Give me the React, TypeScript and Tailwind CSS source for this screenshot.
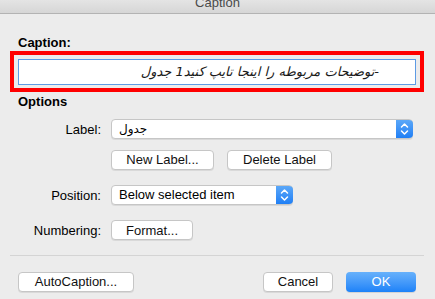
import React from "react";

function Stepper({ className = "" }: { className?: string }) {
  return (
    <div
      className={
        "flex h-full w-[17px] items-center justify-center rounded-r-[4px] bg-gradient-to-b from-[#5aa7f8] to-[#1e7ff5] " +
        className
      }
    >
      <svg width="9" height="14" viewBox="0 0 9 14" fill="none">
        <path d="M1.5 5 L4.5 2 L7.5 5" stroke="white" strokeWidth="1.5" strokeLinecap="round" strokeLinejoin="round" />
        <path d="M1.5 9 L4.5 12 L7.5 9" stroke="white" strokeWidth="1.5" strokeLinecap="round" strokeLinejoin="round" />
      </svg>
    </div>
  );
}

function Btn({ children, w }: { children: React.ReactNode; w: string }) {
  return (
    <div
      className={
        "flex h-[20px] items-center justify-center rounded-[4px] border border-[#c6c6c6] bg-white text-[13px] leading-none text-[#111] shadow-[0_1px_0_rgba(0,0,0,0.08)] " +
        w
      }
    >
      {children}
    </div>
  );
}

export default function App() {
  return (
    <div className="h-[299px] w-[435px] overflow-hidden bg-[#ececec] font-['Liberation_Sans',Arial,sans-serif] text-[13px] text-black">
      {/* title bar */}
      <div className="h-[14px] overflow-hidden border-b border-[#b3b3b3] bg-gradient-to-b from-[#e4e4e4] to-[#d6d6d6]">
        <div className="mt-[-5px] text-center text-[13px] leading-[16px] text-[#4a4a4a]">Caption</div>
      </div>

      <div className="mt-[21px] pl-[18px] font-bold leading-[16px]">Caption:</div>

      {/* red highlight box */}
      <div className="ml-[10px] h-[41px] w-[414px] border-[4px] border-[#ff0000] px-[4px] pb-[3px] pt-[4px]">
        <div
          dir="rtl"
          className="flex h-[26px] items-center border border-[#5d9be4] bg-white pr-[36px] font-['DejaVu_Sans',sans-serif] text-[13px] italic text-[#1a1a1a]"
        >
          -توضیحات مربوطه را اینجا تایپ کنید1 جدول
        </div>
      </div>

      <div className="mt-[2px] pl-[18px] font-bold leading-[16px]">Options</div>

      {/* Label row */}
      <div className="mt-[9px] flex items-center">
        <div className="w-[101px] pt-[1px] text-right">Label:</div>
        <div className="ml-[10px] flex h-[20px] w-[302px] items-center rounded-[4px] border border-[#c6c6c6] bg-white shadow-[0_1px_0_rgba(0,0,0,0.08)]">
          <div className="flex-1 pl-[7px] font-['DejaVu_Sans',sans-serif] text-[12px]">جدول</div>
          <Stepper className="mr-[-1px]" />
        </div>
      </div>

      {/* label buttons */}
      <div className="mt-[10px] flex gap-[13px] pl-[111px]">
        <Btn w="w-[103px]">New Label...</Btn>
        <Btn w="w-[105px]">Delete Label</Btn>
      </div>

      {/* Position row */}
      <div className="mt-[15px] flex items-center">
        <div className="w-[101px] pt-[1px] text-right">Position:</div>
        <div className="ml-[10px] flex h-[20px] w-[182px] items-center rounded-[4px] border border-[#c6c6c6] bg-white shadow-[0_1px_0_rgba(0,0,0,0.08)]">
          <div className="flex-1 pl-[7px]">Below selected item</div>
          <Stepper className="mr-[-1px]" />
        </div>
      </div>

      {/* Numbering row */}
      <div className="mt-[15px] flex items-center">
        <div className="w-[101px] pt-[1px] text-right">Numbering:</div>
        <div className="ml-[10px]">
          <Btn w="w-[82px]">Format...</Btn>
        </div>
      </div>

      <div className="ml-[10px] mt-[14px] h-px w-[414px] bg-[#d4d4d4]" />

      {/* bottom buttons */}
      <div className="mt-[16px] flex items-center pl-[18px]">
        <Btn w="w-[116px]">AutoCaption...</Btn>
        <div className="ml-[129px]">
          <Btn w="w-[70px]">Cancel</Btn>
        </div>
        <div className="ml-[13px] flex h-[20px] w-[70px] items-center justify-center rounded-[4px] bg-gradient-to-b from-[#67b1fb] to-[#1b82f8] text-white shadow-[0_1px_0_rgba(0,0,0,0.1)]">
          OK
        </div>
      </div>
    </div>
  );
}
